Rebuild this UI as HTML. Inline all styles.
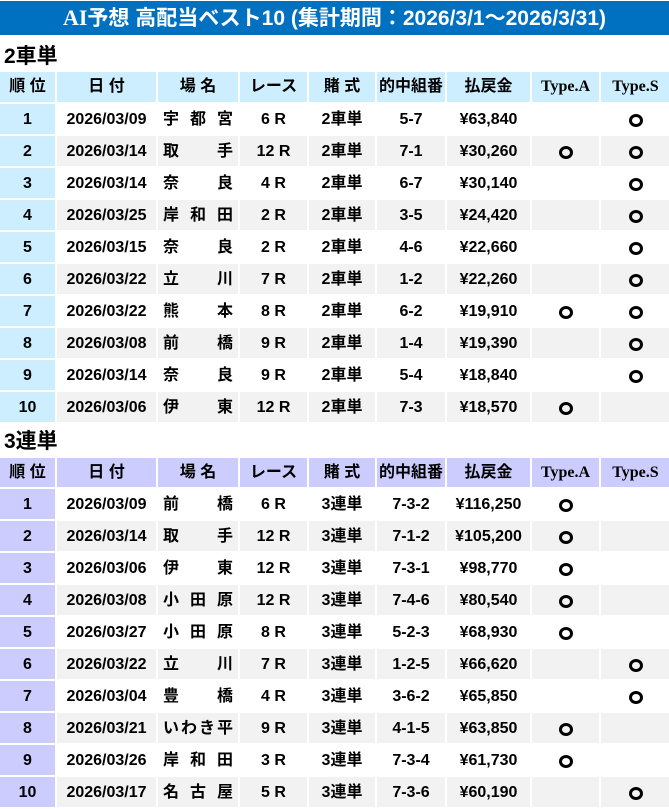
<!DOCTYPE html>
<html><head><meta charset="utf-8"><style>
body{margin:0;width:669px;height:809px;background:#fff;font-family:"Liberation Sans","Noto Sans CJK JP",sans-serif;font-weight:bold;color:#000;position:relative;overflow:hidden}
.title{position:absolute;left:0;top:1px;width:669px;height:34px;background:#0070c0;color:#fff;font-size:21px;line-height:34px;text-align:center;white-space:nowrap}
.title .s{font-family:"Liberation Serif",serif;font-size:22px}
.h{position:absolute;left:4px;font-size:21px;line-height:24px}
.row{position:absolute;left:0;height:30px;display:flex;font-size:16px}
.row>div{height:100%;line-height:32px;text-align:center;margin-right:2px;box-sizing:border-box;white-space:nowrap}
.hd>div{line-height:30px!important}
.c0{width:55px}.c1{width:99px}.c2{width:80px;display:flex;justify-content:space-between;padding:0 5px}.c3{width:67px}.c4{width:66px}.c5{width:68px}.c6{width:83px}.c7{width:67px}.c8{width:69px;margin-right:0!important}
.hd>div{font-size:16px}
.s1 .hd>div{background:#cceeff}
.s2 .hd>div{background:#ccccff}
.s1 .c0{background:#cceeff}
.s2 .c0{background:#ccccff}
.g>div{background:#f2f2f2}
.s1 .g .c0{background:#cceeff}.s2 .g .c0{background:#ccccff}
.hd .t{font-family:"Liberation Serif",serif;font-size:16px}
.o{font-size:0;display:flex;align-items:center;justify-content:center;padding-top:3px}
.o::after{content:"";display:block;width:8px;height:7px;border:3px solid #000;border-radius:50%}
</style></head><body>
<div class="title"><span class="s">AI</span>予想 高配当ベスト10 (集計期間：2026/3/1～2026/3/31)</div>
<div class="h" style="top:45px">2車単</div>
<div class="h" style="top:430px">3連単</div>
<div class="s1">
<div class="row hd" style="top:72px"><div class="c0">順 位</div><div class="c1">日 付</div><div class="c2" style="justify-content:center">場 名</div><div class="c3">レース</div><div class="c4">賭 式</div><div class="c5">的中組番</div><div class="c6">払戻金</div><div class="c7 t">Type.A</div><div class="c8 t">Type.S</div></div>
<div class="row" style="top:104px"><div class="c0">1</div><div class="c1">2026/03/09</div><div class="c2"><span>宇</span><span>都</span><span>宮</span></div><div class="c3">6 R</div><div class="c4">2車単</div><div class="c5">5-7</div><div class="c6">¥63,840</div><div class="c7"></div><div class="c8 o">○</div></div>
<div class="row g" style="top:136px"><div class="c0">2</div><div class="c1">2026/03/14</div><div class="c2"><span>取</span><span>手</span></div><div class="c3">12 R</div><div class="c4">2車単</div><div class="c5">7-1</div><div class="c6">¥30,260</div><div class="c7 o">○</div><div class="c8 o">○</div></div>
<div class="row" style="top:168px"><div class="c0">3</div><div class="c1">2026/03/14</div><div class="c2"><span>奈</span><span>良</span></div><div class="c3">4 R</div><div class="c4">2車単</div><div class="c5">6-7</div><div class="c6">¥30,140</div><div class="c7"></div><div class="c8 o">○</div></div>
<div class="row g" style="top:200px"><div class="c0">4</div><div class="c1">2026/03/25</div><div class="c2"><span>岸</span><span>和</span><span>田</span></div><div class="c3">2 R</div><div class="c4">2車単</div><div class="c5">3-5</div><div class="c6">¥24,420</div><div class="c7"></div><div class="c8 o">○</div></div>
<div class="row" style="top:232px"><div class="c0">5</div><div class="c1">2026/03/15</div><div class="c2"><span>奈</span><span>良</span></div><div class="c3">2 R</div><div class="c4">2車単</div><div class="c5">4-6</div><div class="c6">¥22,660</div><div class="c7"></div><div class="c8 o">○</div></div>
<div class="row g" style="top:264px"><div class="c0">6</div><div class="c1">2026/03/22</div><div class="c2"><span>立</span><span>川</span></div><div class="c3">7 R</div><div class="c4">2車単</div><div class="c5">1-2</div><div class="c6">¥22,260</div><div class="c7"></div><div class="c8 o">○</div></div>
<div class="row" style="top:296px"><div class="c0">7</div><div class="c1">2026/03/22</div><div class="c2"><span>熊</span><span>本</span></div><div class="c3">8 R</div><div class="c4">2車単</div><div class="c5">6-2</div><div class="c6">¥19,910</div><div class="c7 o">○</div><div class="c8 o">○</div></div>
<div class="row g" style="top:328px"><div class="c0">8</div><div class="c1">2026/03/08</div><div class="c2"><span>前</span><span>橋</span></div><div class="c3">9 R</div><div class="c4">2車単</div><div class="c5">1-4</div><div class="c6">¥19,390</div><div class="c7"></div><div class="c8 o">○</div></div>
<div class="row" style="top:360px"><div class="c0">9</div><div class="c1">2026/03/14</div><div class="c2"><span>奈</span><span>良</span></div><div class="c3">9 R</div><div class="c4">2車単</div><div class="c5">5-4</div><div class="c6">¥18,840</div><div class="c7"></div><div class="c8 o">○</div></div>
<div class="row g" style="top:392px"><div class="c0">10</div><div class="c1">2026/03/06</div><div class="c2"><span>伊</span><span>東</span></div><div class="c3">12 R</div><div class="c4">2車単</div><div class="c5">7-3</div><div class="c6">¥18,570</div><div class="c7 o">○</div><div class="c8"></div></div>
</div>
<div class="s2">
<div class="row hd" style="top:458px;height:29px"><div class="c0">順 位</div><div class="c1">日 付</div><div class="c2" style="justify-content:center">場 名</div><div class="c3">レース</div><div class="c4">賭 式</div><div class="c5">的中組番</div><div class="c6">払戻金</div><div class="c7 t">Type.A</div><div class="c8 t">Type.S</div></div>
<div class="row" style="top:489px"><div class="c0">1</div><div class="c1">2026/03/09</div><div class="c2"><span>前</span><span>橋</span></div><div class="c3">6 R</div><div class="c4">3連単</div><div class="c5">7-3-2</div><div class="c6">¥116,250</div><div class="c7 o">○</div><div class="c8"></div></div>
<div class="row g" style="top:521px"><div class="c0">2</div><div class="c1">2026/03/14</div><div class="c2"><span>取</span><span>手</span></div><div class="c3">12 R</div><div class="c4">3連単</div><div class="c5">7-1-2</div><div class="c6">¥105,200</div><div class="c7 o">○</div><div class="c8"></div></div>
<div class="row" style="top:553px"><div class="c0">3</div><div class="c1">2026/03/06</div><div class="c2"><span>伊</span><span>東</span></div><div class="c3">12 R</div><div class="c4">3連単</div><div class="c5">7-3-1</div><div class="c6">¥98,770</div><div class="c7 o">○</div><div class="c8"></div></div>
<div class="row g" style="top:585px"><div class="c0">4</div><div class="c1">2026/03/08</div><div class="c2"><span>小</span><span>田</span><span>原</span></div><div class="c3">12 R</div><div class="c4">3連単</div><div class="c5">7-4-6</div><div class="c6">¥80,540</div><div class="c7 o">○</div><div class="c8"></div></div>
<div class="row" style="top:617px"><div class="c0">5</div><div class="c1">2026/03/27</div><div class="c2"><span>小</span><span>田</span><span>原</span></div><div class="c3">8 R</div><div class="c4">3連単</div><div class="c5">5-2-3</div><div class="c6">¥68,930</div><div class="c7 o">○</div><div class="c8"></div></div>
<div class="row g" style="top:649px"><div class="c0">6</div><div class="c1">2026/03/22</div><div class="c2"><span>立</span><span>川</span></div><div class="c3">7 R</div><div class="c4">3連単</div><div class="c5">1-2-5</div><div class="c6">¥66,620</div><div class="c7"></div><div class="c8 o">○</div></div>
<div class="row" style="top:681px"><div class="c0">7</div><div class="c1">2026/03/04</div><div class="c2"><span>豊</span><span>橋</span></div><div class="c3">4 R</div><div class="c4">3連単</div><div class="c5">3-6-2</div><div class="c6">¥65,850</div><div class="c7"></div><div class="c8 o">○</div></div>
<div class="row g" style="top:713px"><div class="c0">8</div><div class="c1">2026/03/21</div><div class="c2"><span>い</span><span>わ</span><span>き</span><span>平</span></div><div class="c3">9 R</div><div class="c4">3連単</div><div class="c5">4-1-5</div><div class="c6">¥63,850</div><div class="c7 o">○</div><div class="c8"></div></div>
<div class="row" style="top:745px"><div class="c0">9</div><div class="c1">2026/03/26</div><div class="c2"><span>岸</span><span>和</span><span>田</span></div><div class="c3">3 R</div><div class="c4">3連単</div><div class="c5">7-3-4</div><div class="c6">¥61,730</div><div class="c7 o">○</div><div class="c8"></div></div>
<div class="row g" style="top:777px"><div class="c0">10</div><div class="c1">2026/03/17</div><div class="c2"><span>名</span><span>古</span><span>屋</span></div><div class="c3">5 R</div><div class="c4">3連単</div><div class="c5">7-3-6</div><div class="c6">¥60,190</div><div class="c7"></div><div class="c8 o">○</div></div>
</div>
</body></html>
